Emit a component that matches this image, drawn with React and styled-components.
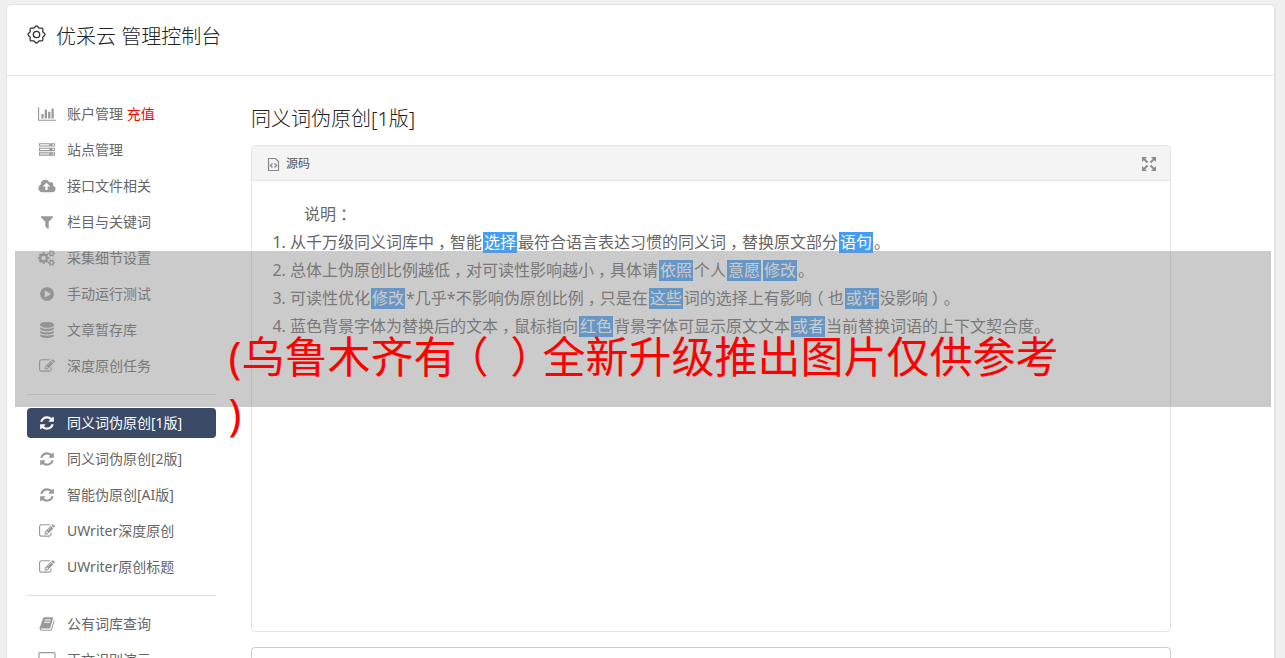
import React from 'react'
import styled, {createGlobalStyle, css} from 'styled-components'

const GlobalStyle = createGlobalStyle`
    * {
        box-sizing: border-box;
    }
    body {
        margin: 0;
        background: #f0f0f0;
        color: #666;
        font-family: 'Noto Sans', 'Noto Sans CJK SC', sans-serif;
        font-size: 14px;
    }
`

const Page = styled.div`
    position: relative;
    height: 100vh;
    padding: 4px 9px 0 6px;
    overflow: hidden;
`

const Panel = styled.div`
    min-height: 100vh;
    background: #fff;
    border: 1px solid #e4e4e4;
    border-right-width: 2px;
    border-radius: 5px 5px 0 0;
`

const Header = styled.header`
    display: flex;
    align-items: flex-start;
    gap: 10px;
    height: 71px;
    padding: 16px 20px;
    border-bottom: 1px solid #e4e4e4;

    & > svg {
        margin-top: 4px;
    }
`

const Brand = styled.h1`
    margin: 0;
    color: #222;
    font-size: 20px;
    font-weight: 300;
    line-height: 32px;
`

const Columns = styled.div`
    display: flex;
    align-items: flex-start;
    gap: 35px;
    padding: 23px 103px 0 20px;
`

const Sidebar = styled.nav`
    display: flex;
    flex: 0 0 189px;
    flex-direction: column;
    gap: 6px;
`

const Divider = styled.hr`
    width: 100%;
    height: 1px;
    margin: 7px 0;
    border: none;
    background: #ddd;
`

const NavLink = styled.a`
    display: flex;
    align-items: center;
    gap: 11px;
    height: 30px;
    padding: 0 11px;
    border-radius: 4px;
    color: #666;
    line-height: 30px;
    text-decoration: none;
    white-space: nowrap;

    & > svg {
        flex: none;
        fill: #999;
    }

    ${props =>
        props.$active &&
        css`
            background: #3b4a66;
            color: #fff;

            & > svg {
                fill: #fff;
            }
        `}
`

const Recharge = styled.span`
    color: #f00;
`

const Main = styled.main`
    flex: 1;
    min-width: 0;
`

const Title = styled.h2`
    margin: 4px 0 11px;
    color: #222;
    font-size: 20px;
    font-weight: 300;
    line-height: 31px;
`

const Editor = styled.section`
    border: 1px solid #e4e4e4;
    border-radius: 4px;
`

const Toolbar = styled.div`
    display: flex;
    align-items: center;
    justify-content: space-between;
    height: 35px;
    padding: 2px 14px 0 15px;
    border-bottom: 1px solid #e4e4e4;
    border-radius: 4px 4px 0 0;
    background: #f4f4f4;
`

const ToolButton = styled.button`
    display: flex;
    align-items: center;
    gap: 6px;
    padding: 0;
    border: none;
    background: none;
    color: #555;
    font-family: inherit;
    font-size: 12px;
    line-height: 18px;
`

const Content = styled.div`
    min-height: 450px;
    padding: 19px 20px;
    font-size: 16px;
    line-height: 28px;
`

const Lead = styled.p`
    margin: 0;
    text-indent: 2em;
`

const Rules = styled.ol`
    margin: 0;
    padding-left: 18px;
`

const Mark = styled.span`
    display: inline-block;
    margin: 0 1px;
    padding: 0 1px;
    background: #459df5;
    color: #fff;
    line-height: 21px;
`

// full-width punctuation centred in its cell
const Punct = styled.span`
    display: inline-block;
    width: 1em;
    font-feature-settings: 'halt';
    text-align: center;
    text-indent: 0;
`

const Result = styled.textarea`
    display: block;
    width: 100%;
    height: 200px;
    margin-top: 15px;
    border: 1px solid #ccc;
    border-radius: 4px;
    resize: none;
`

const Banner = styled.div`
    position: absolute;
    top: 251px;
    right: 14px;
    left: 15px;
    height: 156px;
    padding-top: 77px;
    background: rgba(142, 142, 142, 0.46);
`

const BannerText = styled.p`
    width: 66%;
    margin: 0 auto;
    color: #f00;
    font-size: 43px;
    line-height: 57px;
    white-space: nowrap;
`

const smallCog =
    'v140q0 16-149 31-12 27-30 52 51 113 51 138 0 4-4 7-122 71-124 71-8 0-46-47t-52-68q-20 2-30 2t-30-2q-14 21-52 68t-46 47q-2 0-124-71-4-3-4-7 0-25 51-138-18-25-30-52-149-15-149-31v-140q0-16 149-31 13-29 30-52-51-113-51-138 0-4 4-7 4-2 35-20t59-34 30-16q8 0 46 46.5t52 67.5q20-2 30-2t30 2q51-71 92-112l6-2q4 0 124 70 4 3 4 7 0 25-51 138 17 23 30 52 149 15 149 31z'

// [viewBox width, path]
const icons = {
    chart: [2048, 'M640 896v512h-256v-512h256zm384-512v1024h-256v-1024h256zm1024 1152v128h-2048v-1536h128v1408h1920zm-640-896v768h-256v-768h256zm384-384v1152h-256v-1152h256z'],
    server: [1792, 'M128 1408h1024v-128h-1024v128zm0-512h1024v-128h-1024v128zm1568 448q0-40-28-68t-68-28-68 28-28 68 28 68 68 28 68-28 28-68zm-1568-960h1024v-128h-1024v128zm1568 448q0-40-28-68t-68-28-68 28-28 68 28 68 68 28 68-28 28-68zm0-512q0-40-28-68t-68-28-68 28-28 68 28 68 68 28 68-28 28-68zm96 832v384h-1792v-384h1792zm0-512v384h-1792v-384h1792zm0-512v384h-1792v-384h1792z'],
    cloud: [1920, 'M1280 928q0-14-9-23l-352-352q-9-9-23-9t-23 9l-351 351q-10 12-10 24 0 14 9 23t23 9h224v352q0 13 9.5 22.5t22.5 9.5h192q13 0 22.5-9.5t9.5-22.5v-352h224q13 0 22.5-9.5t9.5-22.5zm640 288q0 159-112.5 271.5t-271.5 112.5h-1088q-185 0-316.5-131.5t-131.5-316.5q0-130 70-240t188-165q-2-30-2-43 0-212 150-362t362-150q156 0 285.5 87t188.5 231q71-62 166-62 106 0 181 75t75 181q0 76-41 138 130 31 213.5 135.5t83.5 238.5z'],
    filter: [1792, 'M1595 295q17 41-14 70l-493 493v742q0 42-39 59-13 5-25 5-27 0-45-19l-256-256q-19-19-19-45v-486l-493-493q-31-29-14-70 17-39 59-39h1280q42 0 59 39z'],
    cogs: [1920, 'M832 896q0-106-75-181t-181-75-181 75-75 181 75 181 181 75 181-75 75-181zm768 512q0-52-38-90t-90-38-90 38-38 90q0 53 37.5 90.5t90.5 37.5 90.5-37.5 37.5-90.5zm0-1024q0-52-38-90t-90-38-90 38-38 90q0 53 37.5 90.5t90.5 37.5 90.5-37.5 37.5-90.5zm-384 421v185q0 10-7 19.5t-16 10.5l-155 24q-11 35-32 76 34 48 90 115 7 10 7 20 0 12-7 19-23 30-82.5 89.5t-78.5 59.5q-11 0-21-7l-115-90q-37 19-77 31-11 108-23 155-7 24-30 24h-186q-11 0-20-7.5t-10-17.5l-23-153q-34-10-75-31l-118 89q-7 7-20 7-11 0-21-8-144-133-144-160 0-9 7-19 10-14 41-53t47-61q-23-44-35-82l-152-24q-10-1-17-9.5t-7-19.5v-185q0-10 7-19.5t16-10.5l155-24q11-35 32-76-34-48-90-115-7-11-7-20 0-12 7-20 22-30 82-89t79-59q11 0 21 7l115 90q34-18 77-32 11-108 23-154 7-24 30-24h186q11 0 20 7.5t10 17.5l23 153q34 10 75 31l118-89q8-7 20-7 11 0 21 8 144 133 144 160 0 9-7 19-12 16-42 54t-45 60q23 48 34 82l152 23q10 2 17 10.5t7 19.5zm640 533' + smallCog + 'm0-1024' + smallCog],
    play: [1792, 'M896 128q209 0 385.5 103t279.5 279.5 103 385.5-103 385.5-279.5 279.5-385.5 103-385.5-103-279.5-279.5-103-385.5 103-385.5 279.5-279.5 385.5-103zm384 823q32-18 32-55t-32-55l-544-320q-31-19-64-1-32 19-32 56v640q0 37 32 56 16 8 32 8 17 0 32-9z'],
    database: [1792, 'M896 768q237 0 443-43t325-127v170q0 69-103 128t-280 93.5-385 34.5-385-34.5-280-93.5-103-128v-170q119 84 325 127t443 43zm0 768q237 0 443-43t325-127v170q0 69-103 128t-280 93.5-385 34.5-385-34.5-280-93.5-103-128v-170q119 84 325 127t443 43zm0-384q237 0 443-43t325-127v170q0 69-103 128t-280 93.5-385 34.5-385-34.5-280-93.5-103-128v-170q119 84 325 127t443 43zm0-1152q208 0 385 34.5t280 93.5 103 128v128q0 69-103 128t-280 93.5-385 34.5-385-34.5-280-93.5-103-128v-128q0-69 103-128t280-93.5 385-34.5z'],
    edit: [1792, 'M888 1184l116-116-152-152-116 116v56h96v96h56zm440-720q-16-16-33 1l-350 350q-17 17-1 33t33-1l350-350q17-17 1-33zm80 594v190q0 119-84.5 203.5t-203.5 84.5h-832q-119 0-203.5-84.5t-84.5-203.5v-832q0-119 84.5-203.5t203.5-84.5h832q63 0 117 25 15 7 18 23 3 17-9 29l-49 49q-14 14-32 8-23-6-45-6h-832q-66 0-113 47t-47 113v832q0 66 47 113t113 47h832q66 0 113-47t47-113v-126q0-13 9-22l64-64q15-15 35-7t20 29zm-96-738l288 288-672 672h-288v-288zm444 132l-92 92-288-288 92-92q28-28 68-28t68 28l152 152q28 28 28 68t-28 68z'],
    refresh: [1792, 'M1639 1056q0 5-1 7-64 268-268 434.5t-478 166.5q-146 0-282.5-55t-243.5-157l-129 129q-19 19-45 19t-45-19-19-45v-448q0-26 19-45t45-19h448q26 0 45 19t19 45-19 45l-137 137q71 66 161 102t187 36q134 0 250-65t186-179q11-17 53-117 8-23 30-23h192q13 0 22.5 9.5t9.5 22.5zm25-800v448q0 26-19 45t-45 19h-448q-26 0-45-19t-19-45 19-45l138-138q-148-137-349-137-134 0-250 65t-186 179q-11 17-53 117-8 23-30 23h-199q-13 0-22.5-9.5t-9.5-22.5v-7q65-268 270-434.5t480-166.5q146 0 284 55.5t245 156.5l130-129q19-19 45-19t45 19 19 45z'],
    book: [1792, 'M1703 478q40 57 18 129l-275 906q-19 64-76.5 107.5t-122.5 43.5h-923q-77 0-148.5-53.5t-99.5-131.5q-24-67-2-127 0-4 3-27t4-37q1-8-3-21.5t-3-19.5q2-11 8-21t16.5-23.5 16.5-23.5q23-38 45-91.5t30-91.5q3-10 .5-30t-.5-28q3-11 17-28t17-23q21-36 42-92t25-90q1-9-2.5-32t.5-28q4-13 22-30.5t22-22.5q19-26 42.5-84.5t27.5-96.5q1-8-3-25.5t-2-26.5q2-8 9-18t18-23 17-21q8-12 16.5-30.5t15-35 16-36 19.5-32 26.5-23.5 36-11.5 47.5 5.5l-1 3q38-9 51-9h761q74 0 114 56t18 130l-274 906q-36 119-71.5 153.5t-128.5 34.5h-869q-27 0-38 15-11 16-1 43 24 70 144 70h923q29 0 56-15.5t35-41.5l300-987q7-22 5-57 38 15 59 43zm-1064 2q-4 13 2 22.5t20 9.5h608q13 0 25.5-9.5t16.5-22.5l21-64q4-13-2-22.5t-20-9.5h-608q-13 0-25.5 9.5t-16.5 22.5zm-83 256q-4 13 2 22.5t20 9.5h608q13 0 25.5-9.5t16.5-22.5l21-64q4-13-2-22.5t-20-9.5h-608q-13 0-25.5 9.5t-16.5 22.5z'],
    desktop: [1920, 'M1792 992v-832q0-13-9.5-22.5t-22.5-9.5h-1600q-13 0-22.5 9.5t-9.5 22.5v832q0 13 9.5 22.5t22.5 9.5h1600q13 0 22.5-9.5t9.5-22.5zm128-832v1088q0 66-47 113t-113 47h-544q0 37 16 77.5t32 71 16 43.5q0 26-19 45t-45 19h-512q-26 0-45-19t-19-45q0-14 16-44t32-70 16-78h-544q-66 0-113-47t-47-113v-1088q0-66 47-113t113-47h1600q66 0 113 47t47 113z'],
}

const Icon = ({name}) => (
    <svg width="18" height="16" viewBox={`0 0 ${icons[name][0]} 1792`} aria-hidden="true">
        <path d={icons[name][1]} />
    </svg>
)

// gear outline with eight soft teeth
const gearPoints = Array.from({length: 96}, (_, i) => {
    const a = (i / 96) * Math.PI * 2
    const r = 7.7 + 0.8 * Math.cos(8 * a)
    return `${(9.5 + r * Math.cos(a)).toFixed(2)},${(9.5 + r * Math.sin(a)).toFixed(2)}`
}).join(' ')

const GearIcon = () => (
    <svg width="19" height="19" viewBox="0 0 19 19" fill="none" stroke="#333" strokeWidth="1.3" aria-hidden="true">
        <polygon points={gearPoints} />
        <circle cx="9.5" cy="9.5" r="3.2" />
    </svg>
)

const SourceIcon = () => (
    <svg width="13" height="16" viewBox="0 0 13 16" fill="none" stroke="#888" aria-hidden="true">
        <path strokeWidth="1.2" d="M1.500 2.500h7l3 3v9h-10z" />
        <path strokeWidth="1.400" d="M5.500 7.500l-2 2 2 2M7.500 7.500l2 2-2 2" />
    </svg>
)

const ExpandIcon = () => (
    <svg width="14" height="14" viewBox="0 0 14 14" fill="#8c8c8c" stroke="#8c8c8c" strokeWidth="2" aria-hidden="true">
        <path stroke="none" d="M0 0h5L0 5zM14 0v5L9 0zM0 14V9l5 5zM14 14H9l5-5z" />
        <path d="M2 2l3.5 3.5M12 2L8.5 5.5M2 12l3.5-3.5M12 12L8.5 8.5" />
    </svg>
)

const Text = ({children}) =>
    children.split(/([，：（）])/).map((part, i) => (i % 2 ? <Punct key={i}>{part}</Punct> : part))

// words between braces were replaced by a synonym
const rules = [
    '从千万级同义词库中，智能{选择}最符合语言表达习惯的同义词，替换原文部分{语句}。',
    '总体上伪原创比例越低，对可读性影响越小，具体请{依照}个人{意愿}{修改}。',
    '可读性优化{修改}*几乎*不影响伪原创比例，只是在{这些}词的选择上有影响（也{或许}没影响）。',
    '蓝色背景字体为替换后的文本，鼠标指向{红色}背景字体可显示原文文本{或者}当前替换词语的上下文契合度。',
]

const Rule = ({text}) => (
    <li>
        {text.split(/[{}]/).map((part, i) => (i % 2 ? <Mark key={i}>{part}</Mark> : <Text key={i}>{part}</Text>))}
    </li>
)

const menu = [
    [
        {icon: 'chart', label: '账户管理', extra: '充值'},
        {icon: 'server', label: '站点管理'},
        {icon: 'cloud', label: '接口文件相关'},
        {icon: 'filter', label: '栏目与关键词'},
        {icon: 'cogs', label: '采集细节设置'},
        {icon: 'play', label: '手动运行测试'},
        {icon: 'database', label: '文章暂存库'},
        {icon: 'edit', label: '深度原创任务'},
    ],
    [
        {icon: 'refresh', label: '同义词伪原创[1版]', active: true},
        {icon: 'refresh', label: '同义词伪原创[2版]'},
        {icon: 'refresh', label: '智能伪原创[AI版]'},
        {icon: 'edit', label: 'UWriter深度原创'},
        {icon: 'edit', label: 'UWriter原创标题'},
    ],
    [
        {icon: 'book', label: '公有词库查询'},
        {icon: 'desktop', label: '正文识别演示'},
    ],
]

const App = () => (
    <Page>
        <GlobalStyle />
        <Panel>
            <Header>
                <GearIcon />
                <Brand>优采云 管理控制台</Brand>
            </Header>
            <Columns>
                <Sidebar>
                    {menu.map((group, i) => (
                        <React.Fragment key={i}>
                            {i > 0 && <Divider />}
                            {group.map(item => (
                                <NavLink key={item.label} href="#" $active={item.active}>
                                    <Icon name={item.icon} />
                                    <span>
                                        {item.label}
                                        {item.extra && <Recharge> {item.extra}</Recharge>}
                                    </span>
                                </NavLink>
                            ))}
                        </React.Fragment>
                    ))}
                </Sidebar>
                <Main>
                    <Title>同义词伪原创[1版]</Title>
                    <Editor>
                        <Toolbar>
                            <ToolButton type="button">
                                <SourceIcon />
                                源码
                            </ToolButton>
                            <ToolButton type="button" aria-label="全屏">
                                <ExpandIcon />
                            </ToolButton>
                        </Toolbar>
                        <Content>
                            <Lead>
                                <Text>说明：</Text>
                            </Lead>
                            <Rules>
                                {rules.map(text => (
                                    <Rule key={text} text={text} />
                                ))}
                            </Rules>
                        </Content>
                    </Editor>
                    <Result aria-label="原创结果" />
                </Main>
            </Columns>
        </Panel>
        <Banner>
            <BannerText>
                <Text>(乌鲁木齐有（）全新升级推出图片仅供参考</Text>
                <br />)
            </BannerText>
        </Banner>
    </Page>
)

export default App
